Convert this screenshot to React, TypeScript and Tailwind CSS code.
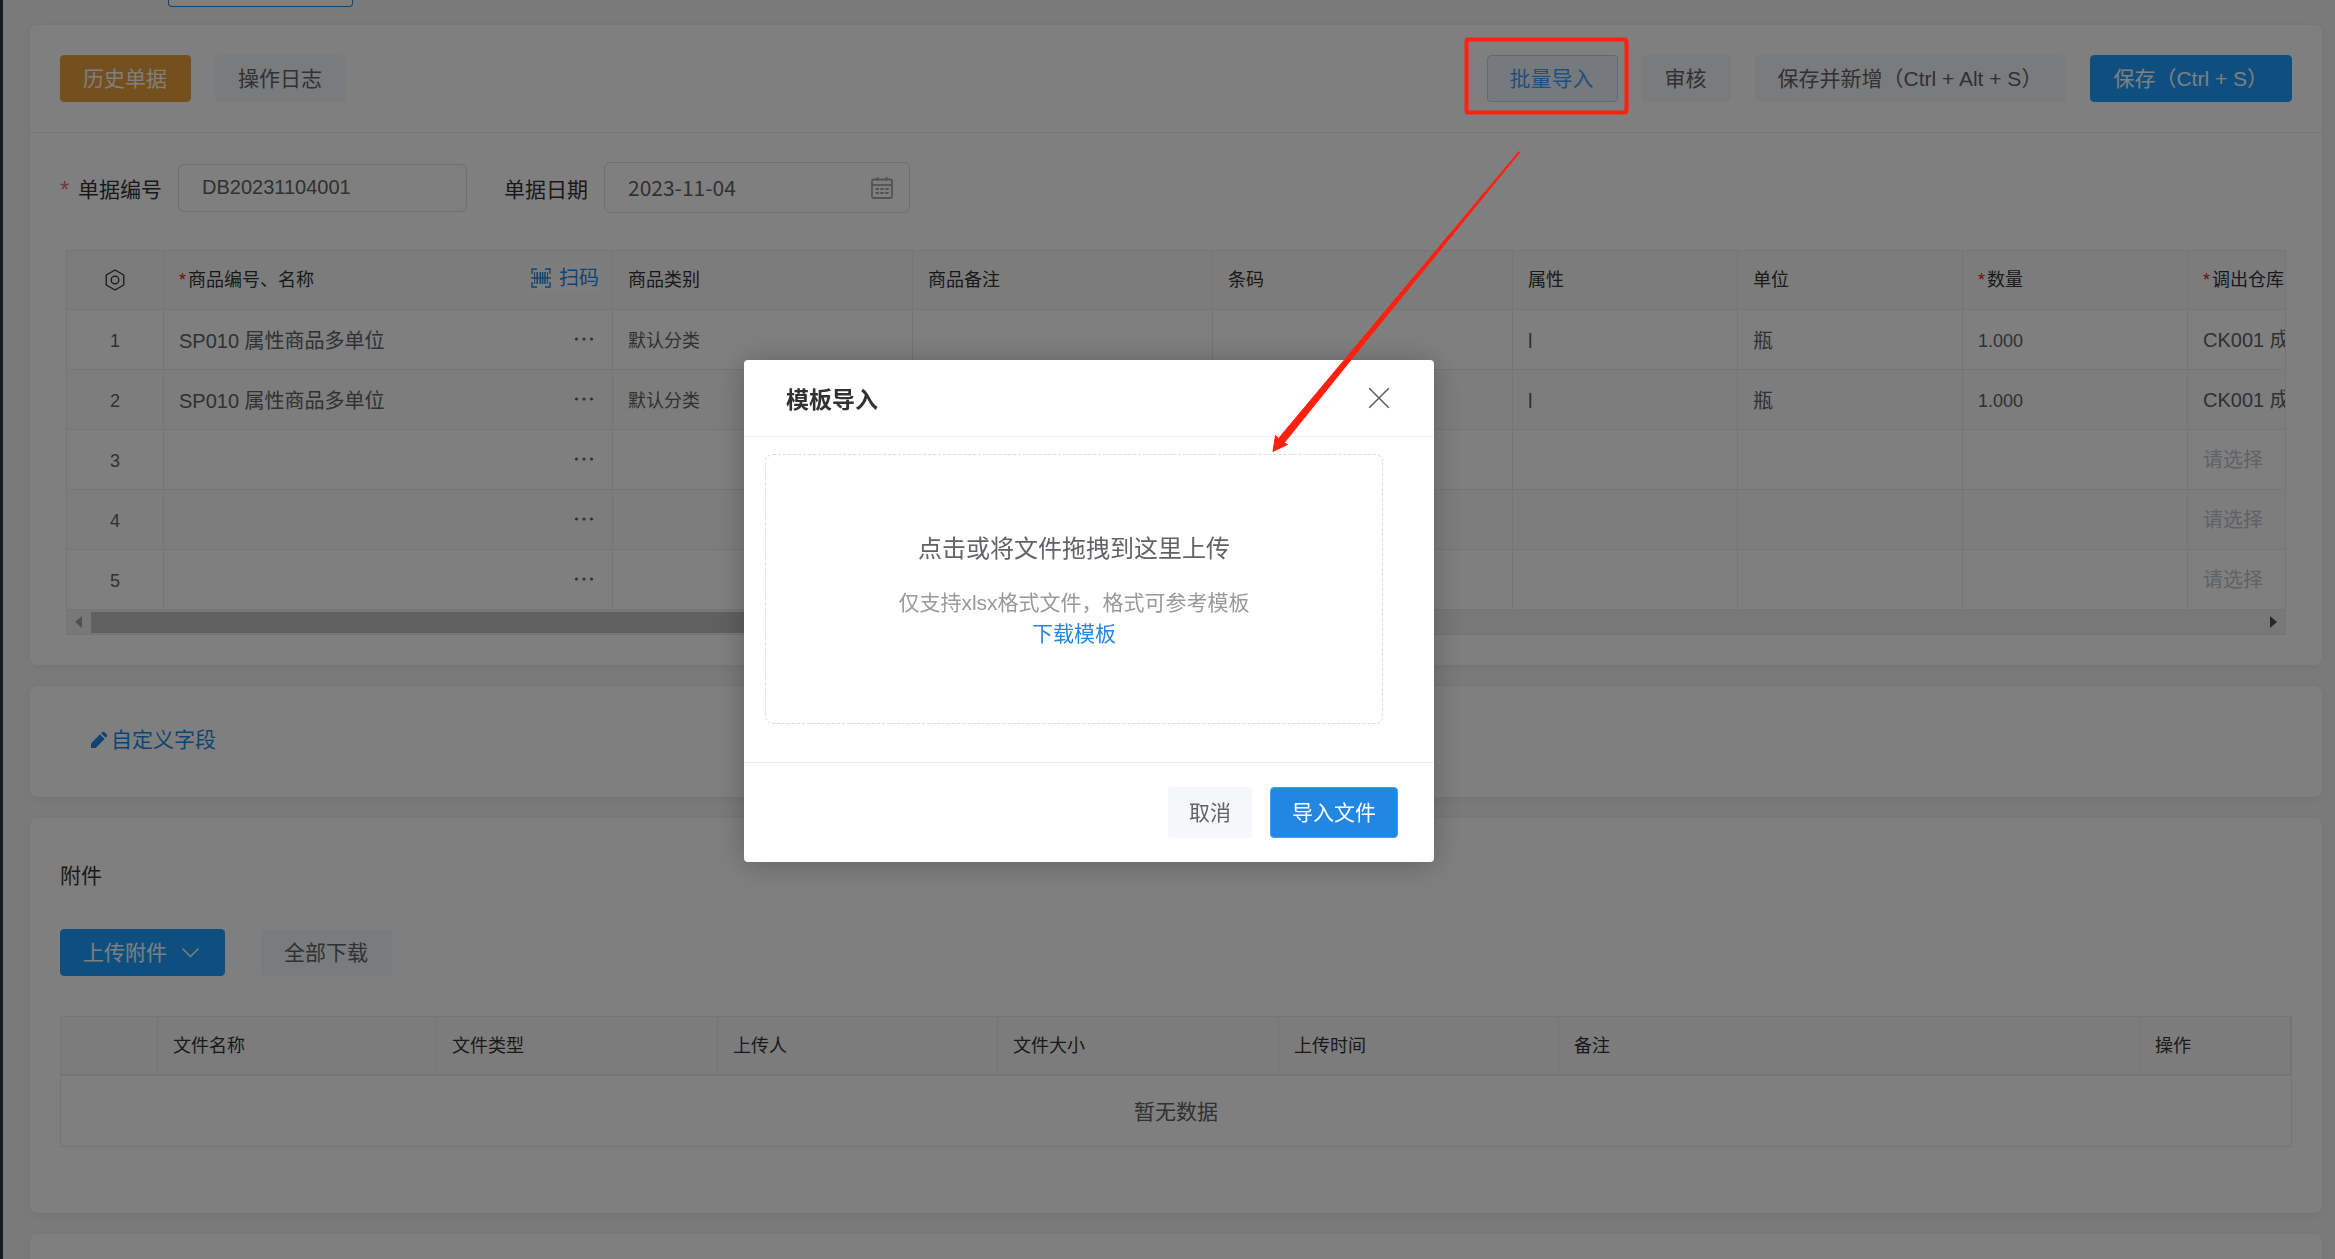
import { useState } from 'react';

interface GoodsRow {
  id: number;
  name: string;
  category: string;
  attribute: string;
  unit: string;
  amount: string;
  warehouse: string;
}

const goodsRows: GoodsRow[] = [
  { id: 1, name: 'SP010 属性商品多单位', category: '默认分类', attribute: 'l', unit: '瓶', amount: '1.000', warehouse: 'CK001 成品仓' },
  { id: 2, name: 'SP010 属性商品多单位', category: '默认分类', attribute: 'l', unit: '瓶', amount: '1.000', warehouse: 'CK001 成品仓' },
  { id: 3, name: '', category: '', attribute: '', unit: '', amount: '', warehouse: '' },
  { id: 4, name: '', category: '', attribute: '', unit: '', amount: '', warehouse: '' },
  { id: 5, name: '', category: '', attribute: '', unit: '', amount: '', warehouse: '' },
];

const fileColumns = ['', '文件名称', '文件类型', '上传人', '文件大小', '上传时间', '备注', '操作'];

const cardClass = 'bg-white shadow-[0_2px_12px_rgba(0,0,0,0.06)]';
const buttonBase = 'flex h-[47px] items-center rounded border pl-[22px] pr-[23px] text-[21px] leading-8 whitespace-nowrap';
const plainButton = `${buttonBase} border-[#f5f7fa] bg-[#f5f7fa] text-[#606266]`;
const blueButton = `${buttonBase} border-[#1e9fff] bg-[#1e9fff] text-white`;
const thClass = 'h-[59px] border-r border-b border-[#e8eaec] bg-[#f8f8f9] px-[15px] text-left text-[18px] leading-6 font-normal text-[#333] whitespace-nowrap';
const tdClass = 'h-[60px] border-r border-b border-[#e8eaec] px-[15px] pt-0.5 text-[18px] leading-6 text-[#606266] whitespace-nowrap';
const cellInput = 'w-full bg-transparent text-[20px] leading-6 text-[#606266] outline-none placeholder:text-[#c0c4cc] placeholder:opacity-100';

function Required() {
  return <span className="mr-0.5 text-[#e02020]">*</span>;
}

function NutIcon() {
  return (
    <svg className="mx-auto" width="20" height="22" viewBox="0 0 20 22" fill="none" stroke="#333" strokeWidth="1.3" strokeLinejoin="round">
      <path d="M10 1l8.8 5v10L10 21l-8.8-5V6z" />
      <circle cx="10" cy="11" r="3.8" />
    </svg>
  );
}

function ScanIcon() {
  return (
    <svg width="20" height="20" viewBox="0 0 20 20" fill="none" stroke="currentColor" strokeWidth="1.4">
      <path d="M1 6V1h5M14 1h5v5M19 14v5h-5M6 19H1v-5" />
      <path d="M0 10h20" />
      <path d="M3.6 4v12M16.4 4v12" strokeWidth="1" />
      <path d="M6.2 4v12M9.2 4v12M11.6 4v12M14 4v12" strokeWidth="1.5" />
    </svg>
  );
}

function CalendarIcon() {
  return (
    <svg width="22" height="22" viewBox="0 0 22 22" fill="none" stroke="#a3a6ad">
      <rect x="1" y="2.5" width="20" height="18.5" rx="1.5" strokeWidth="1.8" />
      <path d="M1 8h20" strokeWidth="1.8" />
      <path d="M6.5 0v4M15.5 0v4" strokeWidth="2" />
      <path d="M4.5 12h3.6M9.3 12h3.6M14.1 12h3.6M4.5 16h3.6M9.3 16h3.6M14.1 16h3.6" strokeWidth="2.2" />
    </svg>
  );
}

function DotsIcon() {
  return (
    <svg width="22" height="6" viewBox="0 0 22 6" fill="#606266">
      <circle cx="3.5" cy="3" r="1.6" />
      <circle cx="11" cy="3" r="1.6" />
      <circle cx="18.5" cy="3" r="1.6" />
    </svg>
  );
}

function PencilIcon() {
  return (
    <svg width="18" height="18" viewBox="0 0 18 18" fill="currentColor">
      <path d="M1 17v-4.6L10 3.3l4.6 4.6L5.6 17z" />
      <path d="M11.2 2.2l1.1-1.1a1.5 1.5 0 0 1 2 0l2.5 2.5a1.5 1.5 0 0 1 0 2l-1.1 1.1z" />
    </svg>
  );
}

function GoodsTable() {
  return (
    <div className="mx-1.5 overflow-hidden border-x border-t border-[#e8eaec]">
      <table className="w-[2420px] table-fixed border-separate border-spacing-0">
        <colgroup>
          <col className="w-[97px]" />
          <col className="w-[449px]" />
          <col className="w-[300px]" />
          <col className="w-[300px]" />
          <col className="w-[300px]" />
          <col className="w-[225px]" />
          <col className="w-[225px]" />
          <col className="w-[225px]" />
          <col className="w-[299px]" />
        </colgroup>
        <thead>
          <tr>
            <th className={thClass}><NutIcon /></th>
            <th className={thClass}>
              <div className="flex items-center justify-between">
                <span><Required />商品编号、名称</span>
                <button className="-mr-0.5 mb-1 flex h-[26px] items-center gap-2 bg-[#fdfdfd] text-[20px] text-[#1e88e5]">
                  <ScanIcon />
                  扫码
                </button>
              </div>
            </th>
            <th className={thClass}>商品类别</th>
            <th className={thClass}>商品备注</th>
            <th className={thClass}>条码</th>
            <th className={thClass}>属性</th>
            <th className={thClass}>单位</th>
            <th className={thClass}><Required />数量</th>
            <th className={thClass}><Required />调出仓库</th>
          </tr>
        </thead>
        <tbody>
          {goodsRows.map(row => (
            <tr key={row.id} className="even:bg-[#fafafa]">
              <td className={`${tdClass} text-center`}>{row.id}</td>
              <td className={tdClass}>
                <div className="flex items-center">
                  <input aria-label="商品编号、名称" className={cellInput} defaultValue={row.name} />
                  <button aria-label="选择商品" className="mr-0.5 mb-1 shrink-0"><DotsIcon /></button>
                </div>
              </td>
              <td className={tdClass}>{row.category}</td>
              <td className={tdClass}></td>
              <td className={tdClass}></td>
              <td className={`${tdClass} text-[20px]`}>{row.attribute}</td>
              <td className={`${tdClass} text-[20px]`}>{row.unit}</td>
              <td className={tdClass}>{row.amount}</td>
              <td className={tdClass}>
                <input aria-label="调出仓库" className={cellInput} defaultValue={row.warehouse} placeholder="请选择" />
              </td>
            </tr>
          ))}
        </tbody>
      </table>

      {/* Horizontal scrollbar */}
      <div className="flex h-[25px] items-center justify-between border-b border-[#e8eaec] bg-[#f1f1f1] px-2">
        <div className="flex flex-1 items-center gap-[9px]">
          <svg width="7" height="12" viewBox="0 0 7 12" fill="#a3a3a3"><path d="M7 0v12L0 6z" /></svg>
          <div className="h-[21px] w-1/2 bg-[#c1c1c1]" />
        </div>
        <svg width="7" height="12" viewBox="0 0 7 12" fill="#505050"><path d="M0 0v12l7-6z" /></svg>
      </div>
    </div>
  );
}

function FileTable() {
  return (
    <table className="w-full table-fixed border-separate border-spacing-0 border-t border-l border-[#e8eaec]">
      <colgroup>
        <col className="w-[97px]" />
        <col className="w-[279px]" />
        <col className="w-[281px]" />
        <col className="w-[280px]" />
        <col className="w-[281px]" />
        <col className="w-[280px]" />
        <col />
        <col className="w-[152px]" />
      </colgroup>
      <thead>
        <tr>
          {fileColumns.map(title => (
            <th key={title} className={`${thClass} border-b-2 last:border-r-2`}>{title}</th>
          ))}
        </tr>
      </thead>
      <tbody>
        <tr>
          <td colSpan={8} className="h-[71px] border-r border-b border-[#e8eaec] pt-0.5 text-center text-[21px] leading-8 text-[#606266]">暂无数据</td>
        </tr>
      </tbody>
    </table>
  );
}

function ImportModal({ onClose }: { onClose: () => void }) {
  return (
    <div className="fixed inset-0 z-10 bg-black/50">
      <div role="dialog" aria-label="模板导入" className="absolute top-[360px] left-[744px] w-[690px] rounded bg-white shadow-[0_2px_30px_rgba(0,0,0,0.25)]">
        {/* Modal Header */}
        <div className="flex h-[77px] items-center justify-between border-b border-[#ebeef5] pr-[44px] pl-[42px]">
          <h2 className="pt-1 text-[23px] leading-8 font-bold text-[#303133]">模板导入</h2>
          <button aria-label="关闭" onClick={onClose}>
            <svg width="22" height="22" viewBox="0 0 22 22" fill="none" stroke="#606266" strokeWidth="1.6">
              <path d="M1.2 1.2l19.6 19.6M20.8 1.2L1.2 20.8" />
            </svg>
          </button>
        </div>

        {/* Drop zone */}
        <div className="pt-[17px] pr-[51px] pb-[38px] pl-[21px]">
          <div className="flex h-[270px] flex-col items-center rounded-lg border border-dashed border-[#d9d9d9] pt-[76px]">
            <p className="mb-5 text-[24px] leading-9 text-[#606266]">点击或将文件拖拽到这里上传</p>
            <p className="text-[21px] leading-[31px] text-[#999]">仅支持xlsx格式文件，格式可参考模板</p>
            <a href="#template" className="text-[21px] leading-[31px] text-[#2287e3]">下载模板</a>
          </div>
        </div>

        {/* Modal Footer */}
        <div className="flex h-[100px] items-center justify-end gap-[18px] border-t border-[#ebebeb] pr-9">
          <button onClick={onClose} className="h-[51px] rounded bg-[#f5f7fa] px-[21px] text-[21px] text-[#606266]">取消</button>
          <button className="h-[51px] rounded border border-[#409eff] bg-[#2287e3] px-[21px] text-[21px] text-white">导入文件</button>
        </div>
      </div>
    </div>
  );
}

export default function App() {
  const [modalOpen, setModalOpen] = useState(true);

  return (
    <div className="flex h-screen flex-col overflow-hidden border-l-[3px] border-[#2b3643] bg-[#f5f5f5] pr-[13px] pl-[27px] font-['Liberation_Sans','Noto_Sans_CJK_SC',sans-serif]">
      <div className="mb-[18px] ml-[138px] h-[7px] w-[185px] shrink-0 rounded-b border-x border-b border-[#1e88e5] bg-white" />

      <section className={`${cardClass} mb-[21px] shrink-0 rounded-lg`}>
        <div className="flex items-center justify-between border-b border-[#ebeef5] p-[30px]">
          <div className="flex gap-6">
            <button className={`${buttonBase} border-[#e6a23c] bg-[#e6a03c] text-white`}>历史单据</button>
            <button className={plainButton}>操作日志</button>
          </div>
          <div className="flex gap-6">
            <button onClick={() => setModalOpen(true)} className={`${buttonBase} border-[#b3d8ff] bg-[#ecf5ff] text-[#409eff]`}>批量导入</button>
            <button className={plainButton}>审核</button>
            <button className={plainButton}>保存并新增（Ctrl + Alt + S）</button>
            <button className={blueButton}>保存（Ctrl + S）</button>
          </div>
        </div>

        <div className="px-[30px] pt-[29px] pb-[30px]">
          <div className="mb-[37px] flex items-center text-[21px]">
            <label htmlFor="bill-no" className="mr-4 flex items-center pt-1 text-[#333]">
              <span className="mr-1.5 w-3 text-[24px] leading-8 text-[#f56c6c]">*</span>单据编号
            </label>
            <input id="bill-no" defaultValue="DB20231104001" className="mr-[37px] h-12 w-[289px] rounded-md border border-[#dcdfe6] px-[23px] text-[20px] text-[#606266]" />
            <label htmlFor="bill-date" className="mr-4 pt-1 text-[#333]">单据日期</label>
            <div className="flex h-[51px] w-[306px] items-center rounded-md border border-[#dcdfe6] pr-4 pl-[23px]">
              <input id="bill-date" defaultValue="2023-11-04" className="min-w-0 flex-1 font-['Noto_Sans_CJK_SC',sans-serif] text-[#606266] outline-none" />
              <CalendarIcon />
            </div>
          </div>
          <GoodsTable />
        </div>
      </section>

      <section className={`${cardClass} mb-[21px] flex h-[111px] shrink-0 items-center rounded-lg px-[60px] pb-1`}>
        <button className="flex items-center gap-[3px] text-[21px] leading-8 text-[#1e88e5]">
          <PencilIcon />
          自定义字段
        </button>
      </section>

      <section className={`${cardClass} mb-[21px] shrink-0 rounded-lg px-[30px] pt-[42px] pb-[66px]`}>
        <h3 className="mb-[37px] text-[21px] leading-8 text-[#333]">附件</h3>
        <div className="mb-10 flex gap-9">
          <button className={`${blueButton} gap-[13px]`}>
            上传附件
            <svg width="21" height="21" viewBox="0 0 21 21" fill="none" stroke="currentColor" strokeWidth="1.5">
              <path d="M2.5 6.5l8 8 8-8" />
            </svg>
          </button>
          <button className={plainButton}>全部下载</button>
        </div>
        <FileTable />
      </section>

      <section className={`${cardClass} min-h-6 flex-1 rounded-t-lg`} />

      {modalOpen && <ImportModal onClose={() => setModalOpen(false)} />}

      {/* Guide marks: frame round the import button, arrow to the dialog */}
      <svg className="pointer-events-none fixed inset-0 z-20 h-full w-full" fill="none">
        <rect x="1466.5" y="39.5" width="160" height="73" rx="2" stroke="#ff2010" strokeWidth="4" />
        <path d="M1518.5 152L1361 340 1278.5 438.5 1275.5 435.5 1273 451.5 1287.5 444.5 1284 443 1367 340 1520 152z" fill="#ff2010" stroke="#ff2010" strokeWidth="1" strokeLinejoin="round" />
      </svg>
    </div>
  );
}
